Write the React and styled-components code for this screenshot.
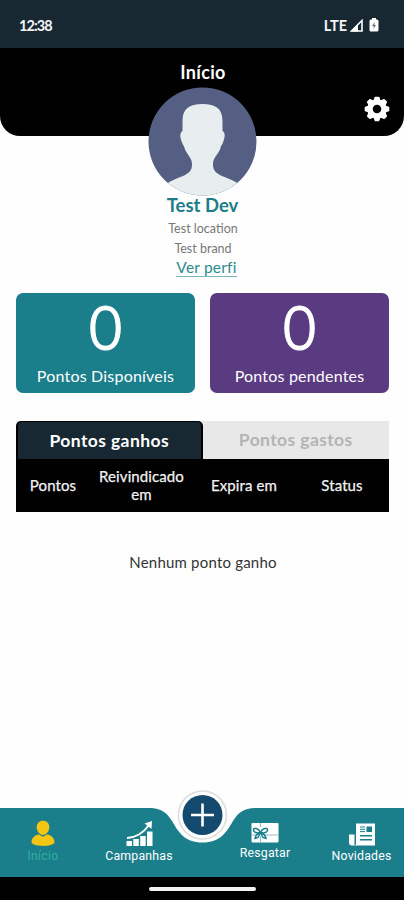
import React, { useState } from 'react';
import styled, { createGlobalStyle, css } from 'styled-components';

const GlobalStyle = createGlobalStyle`
  * {
    box-sizing: border-box;
  }
  body {
    margin: 0;
    background: #fefefe;
    font-family: Lato, 'Liberation Sans', sans-serif;
  }
  button {
    font-family: inherit;
    border: none;
    padding: 0;
    background: none;
    cursor: pointer;
  }
`;

const Screen = styled.div`
  width: 404px;
  height: 900px;
  display: flex;
  flex-direction: column;
  overflow: hidden;
`;

const StatusBar = styled.div`
  height: 48px;
  flex: none;
  padding: 2px 25px 0 19px;
  display: flex;
  align-items: center;
  background: #182833;
  color: #f4f6f7;
  font-size: 14.5px;
  font-weight: 700;
`;

const Clock = styled.div`
  flex: 1;
  letter-spacing: -0.9px;
`;

const Network = styled.div`
  margin-right: 3px;
`;

const Signal = styled.svg`
  margin-right: 6px;
`;

const Header = styled.header`
  height: 88px;
  flex: none;
  display: grid;
  grid-template-columns: 1fr 110px 1fr;
  background: #000;
  border-radius: 0 0 20px 20px;
`;

const Title = styled.h1`
  grid-column: 2;
  margin: 13px 0 0;
  padding-left: 2px;
  text-align: center;
  color: #fff;
  font-size: 18px;
  line-height: 22px;
  font-weight: 700;
  letter-spacing: 0.3px;
`;

const Settings = styled.button`
  justify-self: end;
  align-self: start;
  margin: 48px 14px 0 0;
  height: 26px;
  color: #fff;
  line-height: 0;
`;

const Profile = styled.section`
  margin-top: -49px;
  height: 206px;
  flex: none;
  display: flex;
  flex-direction: column;
  align-items: center;
`;

const Avatar = styled.svg`
  flex: none;
`;

const Name = styled.div`
  margin-top: -2px;
  padding-left: 1px;
  font-size: 18.5px;
  line-height: 22px;
  font-weight: 700;
  color: #1b7d87;
`;

const Detail = styled.div`
  padding-left: 2px;
  font-size: 12.5px;
  line-height: 20px;
  color: #777;

  ${Name} + & {
    margin-top: 3px;
  }
`;

const ProfileLink = styled.a`
  margin-left: 9px;
  font-size: 15.5px;
  line-height: 17px;
  letter-spacing: 0.2px;
  color: #2b8a8b;
  border-bottom: 1px solid #7cb8b8;
`;

const Cards = styled.section`
  flex: none;
  display: grid;
  grid-template-columns: 1fr 1fr;
  gap: 15px;
  padding: 0 15px 0 16px;
`;

const Card = styled.div`
  height: 100px;
  border-radius: 7px;
  display: flex;
  flex-direction: column;
  align-items: center;
  background: ${(props) => props.$color};
  color: #fff;
`;

const Amount = styled.div`
  margin-top: 2px;
  font-family: Inter, sans-serif;
  font-size: 60px;
  line-height: 66px;
  font-weight: 300;
  -webkit-text-stroke: 1px #fff;
`;

const CardLabel = styled.div`
  margin-top: 5px;
  font-size: 16px;
  line-height: 20px;
  letter-spacing: 0.2px;
`;

const Points = styled.section`
  flex: none;
  margin: 28px 15px 0 16px;
`;

const Tabs = styled.div`
  height: 38px;
  display: grid;
  grid-template-columns: 1fr 1fr;
  background: #e8e8e8;
`;

const Tab = styled.button`
  padding-bottom: 1px;
  font-size: 17.5px;
  font-weight: 700;
  letter-spacing: 0.4px;
  color: #b4b4b4;

  ${(props) =>
    props.$active &&
    css`
      color: #fff;
      background: #182833;
      border: 1px solid #000;
      border-width: 1px 2px 0;
      border-radius: 5px 5px 0 0;
    `}
`;

const Columns = styled.div`
  height: 53px;
  padding-bottom: 2px;
  display: grid;
  grid-template-columns: 74px 103px 102px 94px;
  align-items: center;
  background: #000;
`;

const Column = styled.div`
  text-align: center;
  color: #f2f2f2;
  font-size: 15px;
  line-height: 18px;
  letter-spacing: 0.1px;
  -webkit-text-stroke: 0.25px #f2f2f2;
`;

const Empty = styled.div`
  margin-top: 40px;
  padding-left: 2px;
  text-align: center;
  font-size: 15px;
  line-height: 20px;
  letter-spacing: 0.2px;
  color: #333;
`;

const BottomBar = styled.footer`
  position: relative;
  height: 112px;
  flex: none;
  margin-top: auto;
`;

const BarShape = styled.svg`
  position: absolute;
  inset: 0;
`;

const NavItems = styled.nav`
  position: relative;
  height: 89px;
  padding-top: 30px;
  display: grid;
  grid-template-columns: 86px 106px 20px 106px 87px;
`;

const NavItem = styled.button`
  height: 46px;
  display: flex;
  flex-direction: column;
  align-items: center;
  margin-top: ${(props) => props.$lift || 0}px;
  color: ${(props) => (props.$active ? '#2bb09c' : '#fff')};
  font-family: Roboto, sans-serif;
  font-size: 12.3px;
  line-height: 16px;
  letter-spacing: 0.2px;

  &:nth-child(3) {
    grid-column: 4;
  }
`;

const HomeBar = styled.div`
  position: relative;
  height: 23px;
  display: flex;
  justify-content: center;
  align-items: center;
  background: #000;

  &::after {
    content: '';
    width: 107px;
    height: 4px;
    border-radius: 2px;
    background: #f2f2f2;
  }
`;

const GearIcon = () => (
  <svg width="26" height="26" viewBox="-13 -13 26 26">
    <circle r="7" fill="none" stroke="currentColor" strokeWidth="5.400" />
    {[0, 45, 90, 135, 180, 225, 270, 315].map((angle) => (
      <path
        key={angle}
        d="M-3.600 -8.500 L-2.300 -11.800 Q-2.100 -12.300 -1.500 -12.300 H1.500 Q2.100 -12.300 2.300 -11.800 L3.600 -8.500Z"
        transform={`rotate(${angle})`}
        fill="currentColor"
      />
    ))}
  </svg>
);

const PersonIcon = () => (
  <svg width="28" height="30" viewBox="0 0 28 30">
    <path
      d="M2.500 24.500 C2.500 20 6 17.200 10 16.600 L14 18.800 L18 16.600 C22 17.200 25.500 20 25.500 24.500 C24 29 4 29 2.500 24.500Z"
      fill="#f3c515"
    />
    <path
      d="M14 2.800 C17.800 2.800 20.300 5.400 20.300 9 C20.300 13 17.500 17 14 17 C10.500 17 7.700 13 7.700 9 C7.700 5.400 10.200 2.800 14 2.800Z"
      fill="#f3c515"
    />
  </svg>
);

const ChartIcon = () => (
  <svg width="28" height="30" viewBox="0 0 28 30" fill="#fff">
    <rect x="1.500" y="23" width="5.500" height="5" />
    <rect x="8.300" y="21" width="5.500" height="7" />
    <rect x="15.200" y="18" width="5.500" height="10" />
    <rect x="22" y="13.500" width="5.500" height="14.500" />
    <path d="M2 20 C11 19.500 18 15.500 24 7" fill="none" stroke="#fff" strokeWidth="2" />
    <path d="M19.500 5.500 L27 3 L26.500 11Z" />
  </svg>
);

const GiftIcon = () => (
  <svg width="28" height="30" viewBox="0 0 28 30">
    <rect x="0.500" y="8" width="27" height="19.500" rx="1" fill="#fff" />
    <g fill="none">
      <path d="M.5 20H6M13 20H27.500M9.500 8V12M9.500 21V27.500" stroke="#8fc0c5" strokeWidth="1.200" />
      <g stroke="#1b7e8b" strokeWidth="1.500">
        <path d="M9.500 17.500 C7.500 13 3 12.500 2.500 14.500 C2 17.500 6 18.500 9.500 17.500 C13 18.500 17 17.500 16.500 14.500 C16 12.500 11.500 13 9.500 17.500Z" />
        <path d="M9.500 17.500 C6.500 18.500 4.500 20.500 4 23.500 L7 22.500 L9.500 17.500 L12 22.500 L15 23.500 C14.500 20.500 12.500 18.500 9.500 17.500Z" />
      </g>
    </g>
  </svg>
);

const NewsIcon = () => (
  <svg width="28" height="30" viewBox="0 0 28 30">
    <path d="M1 16.500H6.500V27.500H4Q1 27.500 1 24.500Z" fill="#fff" />
    <path d="M8 5.500H27V27.500H6.500C7.500 27 8 26.500 8 25.500Z" fill="#fff" />
    <g stroke="#1b7e8b" fill="none">
      <path d="M12 9H17M12 11.300H17M12 13.600H17" strokeWidth="1" />
      <path d="M12 17.800H24M12 21.800H24" strokeWidth="1.500" />
    </g>
    <rect x="18.500" y="8.500" width="5.500" height="5.500" fill="#1b7e8b" />
  </svg>
);

const navItems = [
  { name: 'Início', icon: PersonIcon },
  { name: 'Campanhas', icon: ChartIcon },
  { name: 'Resgatar', icon: GiftIcon, lift: -3 },
  { name: 'Novidades', icon: NewsIcon },
];

const columns = ['Pontos', 'Reivindicado em', 'Expira em', 'Status'];

const App = () => {
  const [tab, setTab] = useState(0);

  return (
    <Screen>
      <GlobalStyle />
      <StatusBar>
        <Clock>12:38</Clock>
        <Network>LTE</Network>
        <Signal width="13" height="13" viewBox="0 0 13 13">
          <path d="M1.500 12 L12 1.500 V12Z" fill="none" stroke="#fff" strokeWidth="1.600" />
          <path d="M1 12.500 L8 5.500 V12.500Z" fill="#fff" />
        </Signal>
        <svg width="10" height="14" viewBox="0 0 10 14">
          <path
            d="M3 0H7V1.500H8Q9.500 1.500 9.500 3V12Q9.500 13.500 8 13.500H2Q.5 13.500 .5 12V3Q.5 1.500 2 1.500H3Z"
            fill="#fff"
          />
          <path d="M5.500 4 L3 8H4.600V11L7 7H5.500Z" fill="#6d777e" />
        </svg>
      </StatusBar>
      <Header>
        <Title>Início</Title>
        <Settings aria-label="Configurações">
          <GearIcon />
        </Settings>
      </Header>
      <Profile>
        <Avatar width="109" height="109" viewBox="0 0 109 109">
          <defs>
            <clipPath id="avatar">
              <circle cx="54.500" cy="54.500" r="54" />
            </clipPath>
          </defs>
          <g clipPath="url(#avatar)">
            <rect width="109" height="109" fill="#555f84" />
            <path
              d="M54.500 17 C68 17 74.500 22 74.500 34 L74.500 44 C77.500 46 77 50 75.500 54 C74.500 58 73 58 72.500 61 C71 67 65 70 65 77 C65 84 68 86 74 89 C81 92 87 94 91 97 L97 109 H12 L18 97 C22 94 28 92 35 89 C41 86 44 84 44 77 C44 70 38 67 36.500 61 C36 58 34.500 58 33.500 54 C32 50 31.500 46 34.500 44 L34.500 34 C34.500 22 41 17 54.500 17Z"
              fill="#e8edef"
            />
          </g>
        </Avatar>
        <Name>Test Dev</Name>
        <Detail>Test location</Detail>
        <Detail>Test brand</Detail>
        <ProfileLink>Ver perfi</ProfileLink>
      </Profile>
      <Cards>
        <Card $color="#1b7e8b">
          <Amount>0</Amount>
          <CardLabel>Pontos Disponíveis</CardLabel>
        </Card>
        <Card $color="#5a3a80">
          <Amount>0</Amount>
          <CardLabel>Pontos pendentes</CardLabel>
        </Card>
      </Cards>
      <Points>
        <Tabs>
          {['Pontos ganhos', 'Pontos gastos'].map((name, i) => (
            <Tab key={name} $active={tab === i} onClick={() => setTab(i)}>
              {name}
            </Tab>
          ))}
        </Tabs>
        <Columns>
          {columns.map((name) => (
            <Column key={name}>{name}</Column>
          ))}
        </Columns>
      </Points>
      <Empty>Nenhum ponto ganho</Empty>
      <BottomBar>
        <BarShape width="404" height="112" viewBox="0 0 404 112">
          <path
            d="M0 20H150C161 20 167 25 172 33C179 45 185 54.500 202.500 54.500C220 54.500 226 45 233 33C238 25 244 20 255 20H404V90H0Z"
            fill="#1b7e8b"
          />
          <circle cx="202.500" cy="27" r="24" fill="#fff" stroke="#dcdcdc" strokeWidth="1.500" />
          <circle cx="202.500" cy="27" r="20" fill="#144a6d" />
          <path d="M191 27H214M202.500 15.500V38.500" stroke="#fff" strokeWidth="2.600" />
        </BarShape>
        <NavItems>
          {navItems.map(({ name, icon: Icon, lift }, i) => (
            <NavItem key={name} $active={i === 0} $lift={lift}>
              <Icon />
              {name}
            </NavItem>
          ))}
        </NavItems>
        <HomeBar />
      </BottomBar>
    </Screen>
  );
};

export default App;
